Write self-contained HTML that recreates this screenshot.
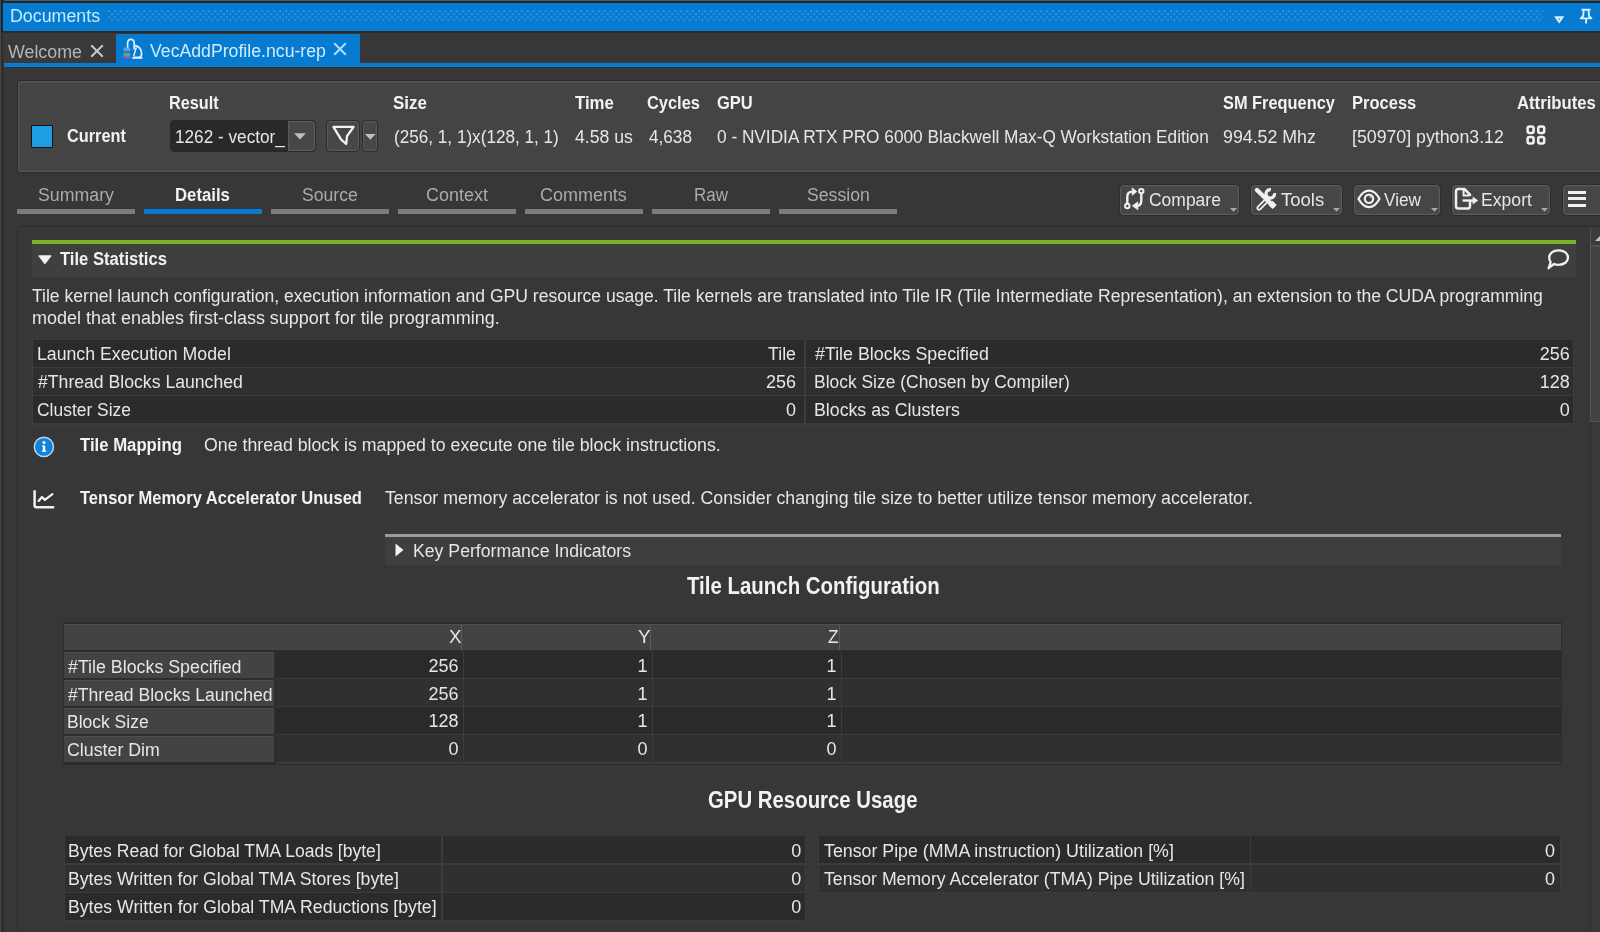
<!DOCTYPE html><html><head><meta charset="utf-8"><title>VecAddProfile.ncu-rep</title><style>html,body{margin:0;padding:0;}body{width:1600px;height:932px;overflow:hidden;background:#373737;position:relative;font-family:"Liberation Sans", sans-serif;}#root{position:absolute;left:0;top:0;width:1600px;height:932px;overflow:hidden;filter:blur(0.6px);}#root>div{position:absolute;}#root>span{position:absolute;white-space:nowrap;line-height:1;display:block;transform-origin:0 0;}#root>svg{position:absolute;overflow:visible;}</style></head><body><div id="root">
<div style="left:0px;top:0px;width:1600px;height:3px;background:#1c2a36;"></div>
<div style="left:0px;top:0px;width:1600px;height:1px;background:#555552;"></div>
<div style="left:0px;top:0px;width:3.5px;height:932px;background:#2e2e2e;"></div>
<div style="left:0px;top:0px;width:3px;height:32px;background:#10283a;"></div>
<div style="left:0px;top:0px;width:1px;height:932px;background:#484848;"></div>
<div style="left:3px;top:2.6px;width:1597px;height:28.4px;background:#067bd0;"></div>
<svg style="left:108px;top:10px" width="1435" height="12"><defs><pattern id="dots" width="5.9" height="5.8" patternUnits="userSpaceOnUse"><rect x="0.3" y="0.5" width="1.5" height="1.5" fill="#55b4ff"/><rect x="3.25" y="3.4" width="1.5" height="1.5" fill="#55b4ff"/></pattern></defs><rect width="1435" height="11.2" fill="url(#dots)" opacity="0.75"/></svg>
<svg style="left:1554px;top:16.4px" width="11" height="8" viewBox="0 0 11 8"><path d="M0.4 0.8 Q0 0.2 0.8 0.2 H9.6 Q10.4 0.2 10 0.8 L5.6 7 Q5.2 7.5 4.8 7 Z" fill="#dcf0ff"/><path d="M4 2.4 L6.4 2.4 L5.2 4.2 Z" fill="#2a8ddb"/></svg>
<svg style="left:1579px;top:8px" width="14" height="17" viewBox="0 0 14 17"><path d="M2.6 1.8 H11.6 M4.7 1.8 L4.2 8 L1.8 10.4 H12.4 L10 8 L9.5 1.8 M7.1 10.4 V15.6" fill="none" stroke="#dcf0ff" stroke-width="1.9" stroke-linejoin="round" stroke-linecap="butt"/></svg>
<div style="left:3px;top:31px;width:1597px;height:32px;background:#373737;"></div>
<div style="left:3px;top:31px;width:1597px;height:1.6px;background:#2b2b2b;"></div>
<div style="left:3px;top:32.6px;width:113px;height:30.4px;background:#3a3939;"></div>
<div style="left:116px;top:34px;width:244px;height:30px;background:#067bd0;"></div>
<div style="left:4px;top:63.1px;width:1596px;height:3.6px;background:#067bd0;"></div>
<div style="left:4px;top:66.7px;width:1596px;height:1.1px;background:#303030;"></div>
<svg style="left:90px;top:44px" width="14" height="14" viewBox="0 0 14 14"><path d="M1.2 1.2 L12.8 12.8 M12.8 1.2 L1.2 12.8" stroke="#c8c8c8" stroke-width="2" fill="none"/></svg>
<svg style="left:333px;top:42px" width="14" height="14" viewBox="0 0 14 14"><path d="M1.2 1.2 L12.8 12.8 M12.8 1.2 L1.2 12.8" stroke="#b4dcfa" stroke-width="2" fill="none"/></svg>
<svg style="left:122px;top:37px" width="22" height="23" viewBox="0 0 22 23"><g fill="none" stroke="#dff0ff" stroke-width="1.7" stroke-linejoin="round"><path d="M5.6 12 V6.4 Q5.6 2.4 8.9 2.4 Q12.2 2.4 12.2 6.4 V12.5"/><path d="M12.2 8.4 Q19.6 9.4 19.6 17 Q19.6 20.4 16.4 20.4 H11.4"/><path d="M14.4 10.2 L11.6 19.4" stroke-width="1.5"/><path d="M10.2 21 H20.6" stroke-width="1.6"/></g><rect x="1.6" y="10.6" width="6.6" height="3.4" fill="#5aa4e6"/><rect x="1.6" y="14" width="6.6" height="2" fill="#4a62d8"/><rect x="1.6" y="16" width="6.6" height="3" fill="#2fc070"/><rect x="1.6" y="19" width="6.6" height="2.2" fill="#c542d6"/></svg>
<div style="left:17px;top:79.7px;width:1589px;height:93.1px;background:#444444;border:1.5px solid #2c2c2c;box-sizing:border-box;border-radius:3px;box-shadow:inset 0 0 0 1.4px #545454;"></div>
<div style="left:30.5px;top:125px;width:22.5px;height:22.5px;background:#1f9de2;border:1.5px solid #141414;box-sizing:border-box;border-radius:1px;"></div>
<div style="left:169.5px;top:120.2px;width:146.5px;height:32.0px;background:#292929;border-radius:4.5px;"></div>
<div style="left:286.9px;top:119.8px;width:29.3px;height:32.6px;background:#474747;border:1.2px solid #2c2c2c;box-sizing:border-box;box-shadow:inset 0 0 0 1.2px #5a5a5a;border-radius:0 4.5px 4.5px 0;"></div>
<svg style="left:294px;top:133px" width="12" height="7" viewBox="0 0 12 7"><path d="M0.1 0.2 H11.8 L5.95 6.6 Z" fill="#c0c0c0"/></svg>
<div style="left:325.6px;top:119.8px;width:34.6px;height:32.6px;background:#474747;border:1.2px solid #2c2c2c;box-sizing:border-box;box-shadow:inset 0 0 0 1.2px #5a5a5a;border-radius:4.5px;"></div>
<div style="left:361.8px;top:119.8px;width:16.6px;height:32.6px;background:#474747;border:1.2px solid #2c2c2c;box-sizing:border-box;box-shadow:inset 0 0 0 1.2px #5a5a5a;border-radius:4.5px;"></div>
<svg style="left:330px;top:123px" width="28" height="26" viewBox="0 0 28 26"><path d="M3.4 3.9 H23.6 L17 13.2 L16.2 21 L11.2 16.6 Z" fill="none" stroke="#f2f2f2" stroke-width="2.3" stroke-linejoin="round"/></svg>
<svg style="left:364.8px;top:133.6px" width="11" height="6" viewBox="0 0 11 6"><path d="M0 0.1 H10.6 L5.3 5.8 Z" fill="#c0c0c0"/></svg>
<svg style="left:1526px;top:125px" width="20" height="21" viewBox="0 0 20 21"><g fill="none" stroke="#f2f2f2" stroke-width="2.5"><rect x="1.6" y="1.5" width="6" height="6.5" rx="2"/><rect x="12.2" y="1.5" width="6" height="6.5" rx="2"/><rect x="1.6" y="12.1" width="6" height="6.5" rx="2"/><rect x="12.2" y="12.1" width="6" height="6.5" rx="2"/></g></svg>
<div style="left:17px;top:209px;width:118px;height:5.3px;background:#7c7c7c;"></div>
<div style="left:144px;top:209px;width:118px;height:5.3px;background:#067bd0;"></div>
<div style="left:271px;top:209px;width:118px;height:5.3px;background:#7c7c7c;"></div>
<div style="left:398px;top:209px;width:118px;height:5.3px;background:#7c7c7c;"></div>
<div style="left:525px;top:209px;width:118px;height:5.3px;background:#7c7c7c;"></div>
<div style="left:652px;top:209px;width:118px;height:5.3px;background:#7c7c7c;"></div>
<div style="left:779px;top:209px;width:118px;height:5.3px;background:#7c7c7c;"></div>
<div style="left:1118.9px;top:183.8px;width:120.7px;height:32.0px;background:#464646;border:1.2px solid #2c2c2c;box-sizing:border-box;border-radius:4.5px;box-shadow:inset 0 0 0 1.2px #5a5a5a;"></div>
<div style="left:1250.2px;top:183.8px;width:92.7px;height:32.0px;background:#464646;border:1.2px solid #2c2c2c;box-sizing:border-box;border-radius:4.5px;box-shadow:inset 0 0 0 1.2px #5a5a5a;"></div>
<div style="left:1353.2px;top:183.8px;width:87.4px;height:32.0px;background:#464646;border:1.2px solid #2c2c2c;box-sizing:border-box;border-radius:4.5px;box-shadow:inset 0 0 0 1.2px #5a5a5a;"></div>
<div style="left:1451.2px;top:183.8px;width:99.9px;height:32.0px;background:#464646;border:1.2px solid #2c2c2c;box-sizing:border-box;border-radius:4.5px;box-shadow:inset 0 0 0 1.2px #5a5a5a;"></div>
<div style="left:1561.7px;top:183.8px;width:48.9px;height:32.0px;background:#464646;border:1.2px solid #2c2c2c;box-sizing:border-box;border-radius:4.5px;box-shadow:inset 0 0 0 1.2px #5a5a5a;"></div>
<svg style="left:1230px;top:207.5px" width="7" height="4" viewBox="0 0 7 4"><path d="M0 0 H7 L3.5 3.8 Z" fill="#a8a8a8"/></svg>
<svg style="left:1333px;top:207.5px" width="7" height="4" viewBox="0 0 7 4"><path d="M0 0 H7 L3.5 3.8 Z" fill="#a8a8a8"/></svg>
<svg style="left:1430.5px;top:207.5px" width="7" height="4" viewBox="0 0 7 4"><path d="M0 0 H7 L3.5 3.8 Z" fill="#a8a8a8"/></svg>
<svg style="left:1540.5px;top:207.5px" width="7" height="4" viewBox="0 0 7 4"><path d="M0 0 H7 L3.5 3.8 Z" fill="#a8a8a8"/></svg>
<svg style="left:1120px;top:184px" width="28" height="30" viewBox="0 0 28 30"><g fill="none" stroke="#f0f0f0" stroke-width="2.4"><circle cx="21.3" cy="7.1" r="2.2" stroke-width="2"/><circle cx="7.3" cy="22" r="2.2" stroke-width="2"/><path d="M7.3 19.3 V12.8 Q7.3 7.6 12.5 7.6"/><path d="M21.3 9.8 V16.6 Q21.3 21.8 17.4 21.8"/></g><path d="M12.2 3.9 L16.8 7.6 L12.2 11.3 Z" fill="#f0f0f0" stroke="#f0f0f0" stroke-width="0.8" stroke-linejoin="round"/><path d="M17.8 17.9 L12.4 21.8 L17.8 25.7 Z" fill="#f0f0f0" stroke="#f0f0f0" stroke-width="0.8" stroke-linejoin="round"/></svg>
<svg style="left:1254px;top:186px" width="26" height="26" viewBox="0 0 26 26"><path d="M11 13.6 L4 20.7 Q2.6 22.3 3.9 23.3 Q5.2 24.3 6.6 22.9 L13.6 15.8" stroke="#f0f0f0" stroke-width="1.8" fill="none" stroke-linejoin="round"/><path d="M20.5 7.1 A4.3 4.3 0 1 1 16.9 3.6" stroke="#f0f0f0" stroke-width="3.2" fill="none"/><path d="M3 4 L19 19.6" stroke="#f0f0f0" stroke-width="4.4" stroke-linecap="round" fill="none"/><path d="M16.4 16.8 L20.6 21" stroke="#f0f0f0" stroke-width="6" stroke-linecap="butt" fill="none"/></svg>
<svg style="left:1356px;top:187px" width="26" height="24" viewBox="0 0 26 24"><path d="M2.5 11.7 Q7 3.7 13 3.7 Q19 3.7 23.5 11.7 Q19 20.1 13 20.1 Q7 20.1 2.5 11.7 Z" fill="none" stroke="#f0f0f0" stroke-width="2.3" stroke-linejoin="round"/><circle cx="13" cy="11.8" r="4.2" fill="none" stroke="#f0f0f0" stroke-width="2.2"/><circle cx="14.6" cy="10.2" r="1.1" fill="#f0f0f0" opacity=".6"/></svg>
<svg style="left:1453px;top:186px" width="28" height="26" viewBox="0 0 28 26"><path d="M17 14 V20 Q17 22.6 14.6 22.6 H5.4 Q3 22.6 3 20 V5.6 Q3 3 5.4 3 H11.4 L17 8.6 V10" fill="none" stroke="#f0f0f0" stroke-width="2.5" stroke-linejoin="round"/><path d="M10.6 3.4 V9.6 H16.6" fill="none" stroke="#f0f0f0" stroke-width="2"/><path d="M9.6 14.5 H21" stroke="#f0f0f0" stroke-width="2.4" fill="none"/><path d="M19.6 10.4 L25.2 14.5 L19.6 18.6 Z" fill="#f0f0f0"/></svg>
<div style="left:1568px;top:190.7px;width:18px;height:3.0px;background:#f2f2f2;"></div>
<div style="left:1568px;top:197.2px;width:18px;height:3.0px;background:#f2f2f2;"></div>
<div style="left:1568px;top:203.6px;width:18px;height:3.0px;background:#f2f2f2;"></div>
<div style="left:17.2px;top:226.1px;width:1588.8px;height:713.9px;background:#373737;border:1.5px solid #2d2d2d;box-sizing:border-box;border-radius:3px;"></div>
<div style="left:1589.6px;top:227.5px;width:10.4px;height:712.5px;background:#393939;border-left:1.3px solid #2f2f2f;box-sizing:border-box;"></div>
<div style="left:1590.3px;top:246.3px;width:12.7px;height:175.6px;background:#434343;border:1.3px solid #535353;box-sizing:border-box;"></div>
<div style="left:1590px;top:227.5px;width:10px;height:18.8px;background:#3c3c3c;border-left:1.3px solid #535353;border-bottom:1.3px solid #505050;box-sizing:border-box;"></div>
<svg style="left:1594.6px;top:234.6px" width="8" height="7" viewBox="0 0 8 7"><path d="M0 6 L6 0 V6 Z" fill="#c4c4c4"/></svg>
<div style="left:31.5px;top:239.7px;width:1544.5px;height:4.5px;background:#79b527;"></div>
<div style="left:31.5px;top:244.2px;width:1544.5px;height:32.8px;background:#3f3f3f;"></div>
<svg style="left:38px;top:255px" width="14" height="10" viewBox="0 0 14 10"><path d="M0.6 1.2 Q0 0.3 1.2 0.3 H12.6 Q13.8 0.3 13.2 1.2 L7.5 8.7 Q6.9 9.4 6.3 8.7 Z" fill="#f2f2f2"/></svg>
<svg style="left:1546px;top:248px" width="24" height="23" viewBox="0 0 24 23"><path d="M12.6 2.4 C18.2 2.4 22 5.4 22 9.6 C22 13.8 18.2 16.8 12.6 16.8 C10.9 16.8 9.4 16.6 8 16 L2.6 20.2 L4.7 14.2 C3.7 12.9 3.2 11.3 3.2 9.6 C3.2 5.4 7 2.4 12.6 2.4 Z" fill="none" stroke="#f2f2f2" stroke-width="2.3" stroke-linejoin="round"/></svg>
<div style="left:31.8px;top:339.3px;width:1542.4px;height:85.5px;background:#3c3c3c;"></div>
<div style="left:33.1px;top:340.4px;width:770.9px;height:26.9px;background:#2b2b2b;"></div>
<div style="left:805.5px;top:340.4px;width:767.1px;height:26.9px;background:#2b2b2b;"></div>
<div style="left:33.1px;top:368.4px;width:770.9px;height:26.9px;background:#2f2f2f;"></div>
<div style="left:805.5px;top:368.4px;width:767.1px;height:26.9px;background:#2f2f2f;"></div>
<div style="left:33.1px;top:396.4px;width:770.9px;height:26.9px;background:#2b2b2b;"></div>
<div style="left:805.5px;top:396.4px;width:767.1px;height:26.9px;background:#2b2b2b;"></div>
<svg style="left:33px;top:436px" width="22" height="22" viewBox="0 0 22 22"><circle cx="10.9" cy="10.9" r="9.6" fill="#1283d8" stroke="#b4d6f2" stroke-width="1.4"/><rect x="9.9" y="9.6" width="2.3" height="5.6" fill="#fff"/><rect x="9" y="9.4" width="2" height="1.3" fill="#fff"/><rect x="8.9" y="14.4" width="4.3" height="1.4" fill="#fff"/><circle cx="11" cy="6.6" r="1.5" fill="#fff"/></svg>
<svg style="left:32px;top:489px" width="24" height="21" viewBox="0 0 24 21"><path d="M2.6 1.3 V16.6 Q2.6 18.2 4.2 18.2 H22.2" fill="none" stroke="#f0f0f0" stroke-width="2.5"/><path d="M6.6 11.9 L10 8 L12.9 10.9 L20.4 5.2" fill="none" stroke="#f0f0f0" stroke-width="2.3" stroke-linejoin="round" stroke-linecap="round"/></svg>
<div style="left:385px;top:534.2px;width:1176px;height:2.7px;background:#9c9c9c;"></div>
<div style="left:385px;top:536.9px;width:1176px;height:28.4px;background:#3e3e3e;"></div>
<svg style="left:395px;top:543px" width="9" height="14" viewBox="0 0 9 14"><path d="M0.5 0.5 L8.5 7 L0.5 13.5 Z" fill="#f2f2f2"/></svg>
<div style="left:62.6px;top:622.4px;width:1499.6px;height:142.8px;background:#2d2d2d;"></div>
<div style="left:64.2px;top:623.9px;width:1496.4px;height:26.3px;background:#434343;border-top:1.2px solid #4f4f4f;box-sizing:border-box;"></div>
<div style="left:461.4px;top:624.5px;width:1.1px;height:25.7px;background:#5c5c5c;"></div>
<div style="left:650.4px;top:624.5px;width:1.1px;height:25.7px;background:#5c5c5c;"></div>
<div style="left:839.4px;top:624.5px;width:1.1px;height:25.7px;background:#5c5c5c;"></div>
<div style="left:275.8px;top:651.4px;width:1284.8px;height:112.2px;background:#3b3b3b;"></div>
<div style="left:275.8px;top:651.4px;width:187.1px;height:26.8px;background:#2a2a2a;"></div>
<div style="left:464.0px;top:651.4px;width:187.9px;height:26.8px;background:#2a2a2a;"></div>
<div style="left:653.0px;top:651.4px;width:187.9px;height:26.8px;background:#2a2a2a;"></div>
<div style="left:842.0px;top:651.4px;width:718.6px;height:26.8px;background:#2a2a2a;"></div>
<div style="left:64.2px;top:652.1999999999999px;width:209.8px;height:26.2px;background:#434343;border-top:1.3px solid #4f4f4f;box-sizing:border-box;"></div>
<div style="left:275.8px;top:679.3px;width:187.1px;height:26.8px;background:#303030;"></div>
<div style="left:464.0px;top:679.3px;width:187.9px;height:26.8px;background:#303030;"></div>
<div style="left:653.0px;top:679.3px;width:187.9px;height:26.8px;background:#303030;"></div>
<div style="left:842.0px;top:679.3px;width:718.6px;height:26.8px;background:#303030;"></div>
<div style="left:64.2px;top:680.0999999999999px;width:209.8px;height:26.2px;background:#434343;border-top:1.3px solid #4f4f4f;box-sizing:border-box;"></div>
<div style="left:275.8px;top:707.1999999999999px;width:187.1px;height:26.8px;background:#2a2a2a;"></div>
<div style="left:464.0px;top:707.1999999999999px;width:187.9px;height:26.8px;background:#2a2a2a;"></div>
<div style="left:653.0px;top:707.1999999999999px;width:187.9px;height:26.8px;background:#2a2a2a;"></div>
<div style="left:842.0px;top:707.1999999999999px;width:718.6px;height:26.8px;background:#2a2a2a;"></div>
<div style="left:64.2px;top:707.9999999999999px;width:209.8px;height:26.2px;background:#434343;border-top:1.3px solid #4f4f4f;box-sizing:border-box;"></div>
<div style="left:275.8px;top:735.0999999999999px;width:187.1px;height:26.8px;background:#303030;"></div>
<div style="left:464.0px;top:735.0999999999999px;width:187.9px;height:26.8px;background:#303030;"></div>
<div style="left:653.0px;top:735.0999999999999px;width:187.9px;height:26.8px;background:#303030;"></div>
<div style="left:842.0px;top:735.0999999999999px;width:718.6px;height:26.8px;background:#303030;"></div>
<div style="left:64.2px;top:735.8999999999999px;width:209.8px;height:26.2px;background:#434343;border-top:1.3px solid #4f4f4f;box-sizing:border-box;"></div>
<div style="left:63.6px;top:835.6px;width:742.4px;height:85.8px;background:#3c3c3c;"></div>
<div style="left:818.2px;top:835.6px;width:743.2px;height:57.7px;background:#3c3c3c;"></div>
<div style="left:64.6px;top:836.4px;width:376.8px;height:27.1px;background:#2b2b2b;"></div>
<div style="left:442.5px;top:836.4px;width:362.5px;height:27.1px;background:#2b2b2b;"></div>
<div style="left:64.6px;top:864.5px;width:376.8px;height:27.1px;background:#303030;"></div>
<div style="left:442.5px;top:864.5px;width:362.5px;height:27.1px;background:#303030;"></div>
<div style="left:64.6px;top:892.6px;width:376.8px;height:27.1px;background:#2b2b2b;"></div>
<div style="left:442.5px;top:892.6px;width:362.5px;height:27.1px;background:#2b2b2b;"></div>
<div style="left:819.2px;top:836.4px;width:430.8px;height:27.1px;background:#2b2b2b;"></div>
<div style="left:1251.1px;top:836.4px;width:309.3px;height:27.1px;background:#2b2b2b;"></div>
<div style="left:819.2px;top:864.5px;width:430.8px;height:27.1px;background:#303030;"></div>
<div style="left:1251.1px;top:864.5px;width:309.3px;height:27.1px;background:#303030;"></div>
<span style="left:9.79px;top:7.36px;font-size:18px;color:#c6eaff;transform:scaleX(0.9895);">Documents</span>
<span style="left:8.00px;top:42.96px;font-size:18px;color:#b4b4b4;transform:scaleX(0.9900);">Welcome</span>
<span style="left:150.00px;top:41.96px;font-size:18px;color:#cdecff;transform:scaleX(0.9821);">VecAddProfile.ncu-rep</span>
<span style="left:66.98px;top:126.66px;font-size:18px;color:#f2f2f2;font-weight:bold;transform:scaleX(0.9058);">Current</span>
<span style="left:168.98px;top:94.36px;font-size:18px;color:#f2f2f2;font-weight:bold;transform:scaleX(0.9036);">Result</span>
<span style="left:392.94px;top:94.36px;font-size:18px;color:#f2f2f2;font-weight:bold;transform:scaleX(0.9414);">Size</span>
<span style="left:575.00px;top:94.36px;font-size:18px;color:#f2f2f2;font-weight:bold;transform:scaleX(0.9307);">Time</span>
<span style="left:646.96px;top:94.36px;font-size:18px;color:#f2f2f2;font-weight:bold;transform:scaleX(0.9109);">Cycles</span>
<span style="left:716.91px;top:94.36px;font-size:18px;color:#f2f2f2;font-weight:bold;transform:scaleX(0.9165);">GPU</span>
<span style="left:1222.98px;top:94.36px;font-size:18px;color:#f2f2f2;font-weight:bold;transform:scaleX(0.9093);">SM Frequency</span>
<span style="left:1351.97px;top:94.36px;font-size:18px;color:#f2f2f2;font-weight:bold;transform:scaleX(0.9173);">Process</span>
<span style="left:1516.98px;top:94.36px;font-size:18px;color:#f2f2f2;font-weight:bold;transform:scaleX(0.9276);">Attributes</span>
<span style="left:174.99px;top:127.86px;font-size:18px;color:#e6e6e6;transform:scaleX(0.9551);">1262 - vector_</span>
<span style="left:393.79px;top:127.86px;font-size:18px;color:#e6e6e6;transform:scaleX(0.9522);">(256, 1, 1)x(128, 1, 1)</span>
<span style="left:575.00px;top:127.86px;font-size:18px;color:#e6e6e6;transform:scaleX(0.9808);">4.58 us</span>
<span style="left:648.99px;top:127.86px;font-size:18px;color:#e6e6e6;transform:scaleX(0.9537);">4,638</span>
<span style="left:716.99px;top:127.86px;font-size:18px;color:#e6e6e6;transform:scaleX(0.9577);">0 - NVIDIA RTX PRO 6000 Blackwell Max-Q Workstation Edition</span>
<span style="left:1222.98px;top:127.86px;font-size:18px;color:#e6e6e6;transform:scaleX(0.9874);">994.52 Mhz</span>
<span style="left:1351.98px;top:127.86px;font-size:18px;color:#e6e6e6;transform:scaleX(0.9850);">[50970] python3.12</span>
<span style="left:37.98px;top:185.86px;font-size:18px;color:#ababab;transform:scaleX(0.9857);">Summary</span>
<span style="left:174.97px;top:185.86px;font-size:18px;color:#f2f2f2;font-weight:bold;transform:scaleX(0.9299);">Details</span>
<span style="left:301.97px;top:185.86px;font-size:18px;color:#ababab;transform:scaleX(0.9794);">Source</span>
<span style="left:425.98px;top:185.86px;font-size:18px;color:#ababab;transform:scaleX(0.9974);">Context</span>
<span style="left:539.98px;top:185.86px;font-size:18px;color:#ababab;transform:scaleX(0.9979);">Comments</span>
<span style="left:693.96px;top:185.86px;font-size:18px;color:#ababab;transform:scaleX(0.9410);">Raw</span>
<span style="left:806.95px;top:185.86px;font-size:18px;color:#ababab;transform:scaleX(0.9815);">Session</span>
<span style="left:1148.97px;top:191.26px;font-size:18px;color:#e6e6e6;transform:scaleX(0.9706);">Compare</span>
<span style="left:1280.79px;top:191.26px;font-size:18px;color:#e6e6e6;transform:scaleX(1.0271);">Tools</span>
<span style="left:1384.00px;top:191.26px;font-size:18px;color:#e6e6e6;transform:scaleX(0.9560);">View</span>
<span style="left:1480.97px;top:191.26px;font-size:18px;color:#e6e6e6;transform:scaleX(0.9786);">Export</span>
<span style="left:60.00px;top:250.26px;font-size:18px;color:#f2f2f2;font-weight:bold;transform:scaleX(0.9239);">Tile Statistics</span>
<span style="left:32.00px;top:286.76px;font-size:18px;color:#e6e6e6;transform:scaleX(0.9751);">Tile kernel launch configuration, execution information and GPU resource usage. Tile kernels are translated into Tile IR (Tile Intermediate Representation), an extension to the CUDA programming</span>
<span style="left:31.99px;top:309.26px;font-size:18px;color:#e6e6e6;transform:scaleX(0.9990);">model that enables first-class support for tile programming.</span>
<span style="left:36.79px;top:344.66px;font-size:18px;color:#e6e6e6;transform:scaleX(0.9832);">Launch Execution Model</span>
<span style="left:768.05px;top:344.66px;font-size:18px;color:#e6e6e6;transform:scaleX(0.9867);">Tile</span>
<span style="left:815.00px;top:344.66px;font-size:18px;color:#e6e6e6;transform:scaleX(0.9911);">#Tile Blocks Specified</span>
<span style="left:1539.75px;top:344.66px;font-size:18px;color:#e6e6e6;">256</span>
<span style="left:37.80px;top:372.66px;font-size:18px;color:#e6e6e6;transform:scaleX(0.9795);">#Thread Blocks Launched</span>
<span style="left:765.95px;top:372.66px;font-size:18px;color:#e6e6e6;">256</span>
<span style="left:813.99px;top:372.66px;font-size:18px;color:#e6e6e6;transform:scaleX(0.9686);">Block Size (Chosen by Compiler)</span>
<span style="left:1539.75px;top:372.66px;font-size:18px;color:#e6e6e6;">128</span>
<span style="left:36.78px;top:400.66px;font-size:18px;color:#e6e6e6;transform:scaleX(0.9691);">Cluster Size</span>
<span style="left:785.98px;top:400.66px;font-size:18px;color:#e6e6e6;">0</span>
<span style="left:813.99px;top:400.66px;font-size:18px;color:#e6e6e6;transform:scaleX(0.9850);">Blocks as Clusters</span>
<span style="left:1559.78px;top:400.66px;font-size:18px;color:#e6e6e6;">0</span>
<span style="left:80.00px;top:436.26px;font-size:18px;color:#f2f2f2;font-weight:bold;transform:scaleX(0.9292);">Tile Mapping</span>
<span style="left:204.00px;top:436.26px;font-size:18px;color:#e6e6e6;transform:scaleX(0.9856);">One thread block is mapped to execute one tile block instructions.</span>
<span style="left:80.00px;top:489.26px;font-size:18px;color:#f2f2f2;font-weight:bold;transform:scaleX(0.9180);">Tensor Memory Accelerator Unused</span>
<span style="left:385.00px;top:489.26px;font-size:18px;color:#e6e6e6;transform:scaleX(0.9857);">Tensor memory accelerator is not used. Consider changing tile size to better utilize tensor memory accelerator.</span>
<span style="left:412.79px;top:542.26px;font-size:18px;color:#e6e6e6;transform:scaleX(0.9816);">Key Performance Indicators</span>
<span style="left:687.08px;top:575.03px;font-size:23px;color:#f2f2f2;font-weight:bold;transform:scaleX(0.8880);">Tile Launch Configuration</span>
<span style="left:449.32px;top:628.36px;font-size:18px;color:#e6e6e6;transform:scaleX(1.0433);">X</span>
<span style="left:638.32px;top:628.36px;font-size:18px;color:#e6e6e6;transform:scaleX(1.0433);">Y</span>
<span style="left:828.08px;top:628.36px;font-size:18px;color:#e6e6e6;transform:scaleX(0.9612);">Z</span>
<span style="left:67.80px;top:657.76px;font-size:18px;color:#e6e6e6;transform:scaleX(0.9890);">#Tile Blocks Specified</span>
<span style="left:428.55px;top:656.76px;font-size:18px;color:#e6e6e6;">256</span>
<span style="left:637.58px;top:656.76px;font-size:18px;color:#e6e6e6;">1</span>
<span style="left:826.58px;top:656.76px;font-size:18px;color:#e6e6e6;">1</span>
<span style="left:67.80px;top:685.56px;font-size:18px;color:#e6e6e6;transform:scaleX(0.9780);">#Thread Blocks Launched</span>
<span style="left:428.55px;top:684.56px;font-size:18px;color:#e6e6e6;">256</span>
<span style="left:637.58px;top:684.56px;font-size:18px;color:#e6e6e6;">1</span>
<span style="left:826.58px;top:684.56px;font-size:18px;color:#e6e6e6;">1</span>
<span style="left:66.78px;top:713.36px;font-size:18px;color:#e6e6e6;transform:scaleX(0.9716);">Block Size</span>
<span style="left:428.55px;top:712.36px;font-size:18px;color:#e6e6e6;">128</span>
<span style="left:637.58px;top:712.36px;font-size:18px;color:#e6e6e6;">1</span>
<span style="left:826.58px;top:712.36px;font-size:18px;color:#e6e6e6;">1</span>
<span style="left:66.78px;top:741.16px;font-size:18px;color:#e6e6e6;transform:scaleX(0.9875);">Cluster Dim</span>
<span style="left:448.58px;top:740.16px;font-size:18px;color:#e6e6e6;">0</span>
<span style="left:637.58px;top:740.16px;font-size:18px;color:#e6e6e6;">0</span>
<span style="left:826.58px;top:740.16px;font-size:18px;color:#e6e6e6;">0</span>
<span style="left:707.85px;top:789.33px;font-size:23px;color:#f2f2f2;font-weight:bold;transform:scaleX(0.8858);">GPU Resource Usage</span>
<span style="left:67.99px;top:841.76px;font-size:18px;color:#e6e6e6;transform:scaleX(0.9748);">Bytes Read for Global TMA Loads [byte]</span>
<span style="left:791.18px;top:841.76px;font-size:18px;color:#e6e6e6;">0</span>
<span style="left:67.99px;top:869.66px;font-size:18px;color:#e6e6e6;transform:scaleX(0.9803);">Bytes Written for Global TMA Stores [byte]</span>
<span style="left:791.18px;top:869.66px;font-size:18px;color:#e6e6e6;">0</span>
<span style="left:67.99px;top:897.56px;font-size:18px;color:#e6e6e6;transform:scaleX(0.9816);">Bytes Written for Global TMA Reductions [byte]</span>
<span style="left:791.18px;top:897.56px;font-size:18px;color:#e6e6e6;">0</span>
<span style="left:824.00px;top:841.76px;font-size:18px;color:#e6e6e6;transform:scaleX(0.9879);">Tensor Pipe (MMA instruction) Utilization [%]</span>
<span style="left:1544.98px;top:841.76px;font-size:18px;color:#e6e6e6;">0</span>
<span style="left:824.00px;top:869.66px;font-size:18px;color:#e6e6e6;transform:scaleX(0.9807);">Tensor Memory Accelerator (TMA) Pipe Utilization [%]</span>
<span style="left:1544.98px;top:869.66px;font-size:18px;color:#e6e6e6;">0</span>
</div></body></html>
